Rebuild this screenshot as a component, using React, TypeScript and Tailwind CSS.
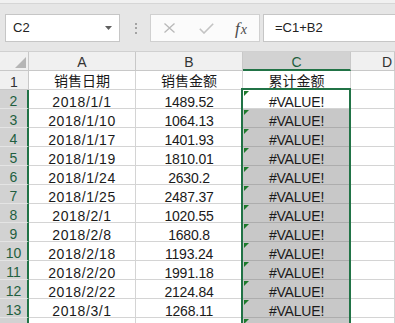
import React from "react";

const data: [string, string][] = [
  ["2018/1/1", "1489.52"],
  ["2018/1/10", "1064.13"],
  ["2018/1/17", "1401.93"],
  ["2018/1/19", "1810.01"],
  ["2018/1/24", "2630.2"],
  ["2018/1/25", "2487.37"],
  ["2018/2/1", "1020.55"],
  ["2018/2/8", "1680.8"],
  ["2018/2/18", "1193.24"],
  ["2018/2/20", "1991.18"],
  ["2018/2/22", "2124.84"],
  ["2018/3/1", "1268.11"],
  ["", ""],
];

function Tri() {
  return (
    <svg className="absolute left-[1px] top-[1px]" width="5" height="5" viewBox="0 0 5 5">
      <polygon points="0,0 5,0 0,5" fill="#1d7a2c" />
    </svg>
  );
}

export default function App() {
  const cell =
    "h-[19px] border-b border-r border-[#d4d4d4] flex items-end justify-center leading-[11px] text-[14px] text-[#1a1a1a] overflow-hidden";
  return (
    <div className="w-[395px] h-[323px] overflow-hidden bg-white font-['Liberation_Sans','Noto_Sans_CJK_SC',sans-serif]">
      {/* formula bar */}
      <div className="h-[51px] bg-[#e6e6e6] flex flex-col">
        <div className="h-[4px] bg-[#f1f1f1] border-b border-[#d6d6d6]" />
        <div className="flex items-start pt-[10px] pl-[5px]">
          <div className="w-[115px] h-[28px] bg-white border border-[#c6c6c6] flex items-center pl-[7px] pr-[7px]">
            <span className="text-[13px] text-[#222] flex-1">C2</span>
            <svg width="7" height="4" viewBox="0 0 7 4">
              <polygon points="0,0 7,0 3.5,4" fill="#5f5f5f" />
            </svg>
          </div>
          <div className="ml-[14px] h-[28px] w-[3px] flex flex-col items-center justify-center gap-[2.5px]">
            <span className="w-[2px] h-[2px] bg-[#a3a3a3]" />
            <span className="w-[2px] h-[2px] bg-[#a3a3a3]" />
            <span className="w-[2px] h-[2px] bg-[#a3a3a3]" />
          </div>
          <div className="ml-[13px] w-[110px] h-[28px] bg-[#fbfbfb] border border-[#d0d0d0] flex items-center">
            <svg className="ml-[13px]" width="11" height="10" viewBox="0 0 11 10">
              <path d="M0.5 0.5 L10.5 9.5 M10.5 0.5 L0.5 9.5" stroke="#b9b9b9" strokeWidth="1.3" fill="none" />
            </svg>
            <svg className="ml-[24px]" width="15" height="11" viewBox="0 0 15 11">
              <path d="M0.8 5.8 L5 10 L14.2 0.8" stroke="#c3c3c3" strokeWidth="1.6" fill="none" />
            </svg>
            <span className="ml-[21px] font-['Liberation_Serif',serif] italic text-[#4a4a4a] text-[17px] leading-none flex items-baseline">
              <span>f</span>
              <span className="text-[14px] ml-[1px]">x</span>
            </span>
          </div>
          <div className="ml-[3px] flex-1 h-[28px] bg-white border border-r-0 border-[#c6c6c6] flex items-center pl-[11px]">
            <span className="text-[13px] text-[#222]">=C1+B2</span>
          </div>
        </div>
      </div>

      {/* grid */}
      <div className="relative">
        <div className="grid grid-cols-[29px_107px_107px_108px_1fr] border-t border-[#d0d0d0]">
          {/* header row */}
          <div className="h-[19px] bg-[#f0f0f0] border-b border-r border-[#c8c8c8] relative">
            <svg className="absolute right-[2px] bottom-[2px]" width="11" height="11" viewBox="0 0 11 11">
              <polygon points="11,0 11,11 0,11" fill="#b5b5b5" />
            </svg>
          </div>
          <div className="h-[19px] bg-[#f0f0f0] border-b border-r border-[#c8c8c8] flex items-end justify-center leading-[11px] pb-[2px] text-[14px] text-[#333]">A</div>
          <div className="h-[19px] bg-[#f0f0f0] border-b border-r border-[#c8c8c8] flex items-end justify-center leading-[11px] pb-[2px] text-[14px] text-[#333]">B</div>
          <div className="h-[19px] bg-[#d2d2d2] border-b-2 border-b-[#217346] border-r border-r-[#c8c8c8] flex items-end justify-center leading-[11px] pb-[1px] text-[14px] text-[#1f5f40]">C</div>
          <div className="h-[19px] bg-[#f0f0f0] border-b border-r border-[#c8c8c8] flex items-end leading-[11px] pb-[2px] pl-[31px] text-[14px] text-[#333]">D</div>

          {/* row 1 */}
          <div className="h-[19px] bg-[#f0f0f0] border-b border-r border-[#c8c8c8] flex items-end justify-center leading-[11px] pb-[1px] text-[14px] text-[#333]">1</div>
          <div className={cell + " pb-[2px] text-[14.5px]"}>销售日期</div>
          <div className={cell + " pb-[2px] text-[14.5px]"}>销售金额</div>
          <div className={cell + " pb-[2px] text-[14.5px]"}>累计金额</div>
          <div className={cell} />

          {data.map(([d, v], i) => {
            const n = i + 2;
            const active = n === 2;
            const last = n === 14;
            return (
              <React.Fragment key={n}>
                <div className="h-[19px] bg-[#d2d2d2] border-b border-b-[#e4e4e4] border-r-2 border-r-[#217346] flex items-end justify-center leading-[11px] pb-[1px] text-[14px] text-[#1f5f40]">
                  {last ? "" : n}
                </div>
                <div className={cell + " tracking-[0.6px]"}>{d}</div>
                <div className={cell + " tracking-[-0.2px]"}>{v}</div>
                <div
                  className={
                    "relative h-[19px] border-b border-r flex items-end justify-center leading-[11px] text-[14px] text-[#1a1a1a] tracking-[-0.2px] " +
                    (active ? "bg-white border-[#d4d4d4]" : "bg-[#c8c8c8] border-[#adadad]")
                  }
                >
                  <Tri />
                  {last ? "" : "#VALUE!"}
                </div>
                <div className={cell} />
              </React.Fragment>
            );
          })}
        </div>
        {/* selection outline */}
        <div className="absolute left-[241px] top-[37px] w-[110px] h-[260px] border-2 border-[#217346] pointer-events-none" />
      </div>
    </div>
  );
}
